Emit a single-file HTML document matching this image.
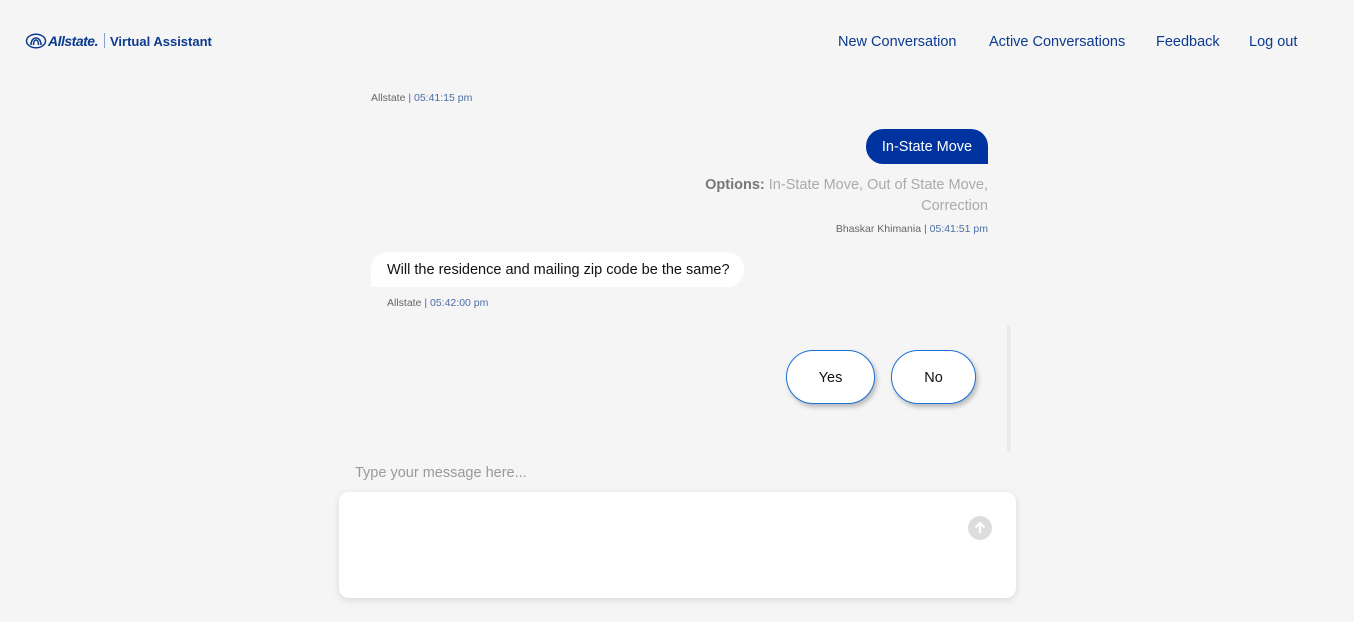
<!DOCTYPE html>
<html><head><style>
*{margin:0;padding:0;box-sizing:border-box}
body{width:1366px;height:622px;background:#f5f5f5;font-family:"Liberation Sans",sans-serif;position:relative;overflow:hidden}
.a{position:absolute;white-space:nowrap}
.nav{top:34px;font-size:14.5px;color:#0b3a8f}
.ts{font-size:10.5px;color:#666}
.ts span{color:#4a6fa5}
</style></head><body>
<div style="position:absolute;right:0;top:0;width:12px;height:622px;background:#fff"></div>
<svg class="a" style="left:25px;top:33px" width="22" height="16" viewBox="0 0 22 16"><g fill="none" stroke="#0b3a8f" stroke-width="1.5"><ellipse cx="11" cy="8" rx="9.5" ry="6.8"/><path d="M6 12c0-4 2-7 5-7s5 3 5 7M8.5 12c0-3 1-5 2.5-5s2.5 2 2.5 5"/></g></svg>
<div class="a" style="left:48px;top:33px;font-size:14px;font-weight:bold;font-style:italic;color:#0b3a8f;letter-spacing:-0.5px">Allstate.</div>
<div class="a" style="left:104px;top:33px;width:1px;height:15px;background:#8aa0c8"></div>
<div class="a" style="left:110px;top:34px;font-size:13px;font-weight:bold;color:#0b3a8f">Virtual Assistant</div>
<div class="a nav" style="left:838px">New Conversation</div>
<div class="a nav" style="left:989px">Active Conversations</div>
<div class="a nav" style="left:1156px">Feedback</div>
<div class="a nav" style="left:1249px">Log out</div>
<div class="a ts" style="left:371px;top:92px">Allstate | <span>05:41:15 pm</span></div>
<div class="a" style="left:866px;top:129px;width:122px;height:35px;background:#0033a0;color:#fff;border-radius:17px 17px 0 17px;font-size:14.5px;line-height:37px;text-align:center">In-State Move</div>
<div class="a" style="right:378px;top:175px;font-size:14.5px;color:#aaa;text-align:right;line-height:21px"><b style="color:#777">Options:</b> In-State Move, Out of State Move,<br>Correction</div>
<div class="a ts" style="right:378px;top:223px">Bhaskar Khimania | <span>05:41:51 pm</span></div>
<div class="a" style="left:371px;top:252px;width:373px;height:35px;background:#fff;border-radius:17px 17px 17px 0;font-size:14.5px;line-height:37px;padding-left:16px;color:#111">Will the residence and mailing zip code be the same?</div>
<div class="a ts" style="left:387px;top:297px">Allstate | <span>05:42:00 pm</span></div>
<div class="a" style="left:1007px;top:325px;width:4px;height:127px;background:#ebebeb"></div>
<div class="a" style="left:786px;top:350px;width:89px;height:54px;border:1px solid #1a6fd8;border-radius:27px;background:#fff;box-shadow:2px 3px 5px rgba(0,0,0,.25);text-align:center;line-height:54px;font-size:14.5px;color:#111">Yes</div>
<div class="a" style="left:891px;top:350px;width:85px;height:54px;border:1px solid #1a6fd8;border-radius:27px;background:#fff;box-shadow:2px 3px 5px rgba(0,0,0,.25);text-align:center;line-height:54px;font-size:14.5px;color:#111">No</div>
<div class="a" style="left:355px;top:465px;font-size:14.5px;color:#999">Type your message here...</div>
<div class="a" style="left:339px;top:492px;width:677px;height:106px;background:#fff;border-radius:10px;box-shadow:0 2px 8px rgba(0,0,0,.12)"></div>
<div class="a" style="left:968px;top:516px;width:24px;height:24px;border-radius:50%;background:#ddd"><svg width="24" height="24" viewBox="0 0 24 24"><path d="M12 17V7M7.5 11.5L12 7l4.5 4.5" stroke="#fff" stroke-width="2.2" fill="none"/></svg></div>
</body></html>
